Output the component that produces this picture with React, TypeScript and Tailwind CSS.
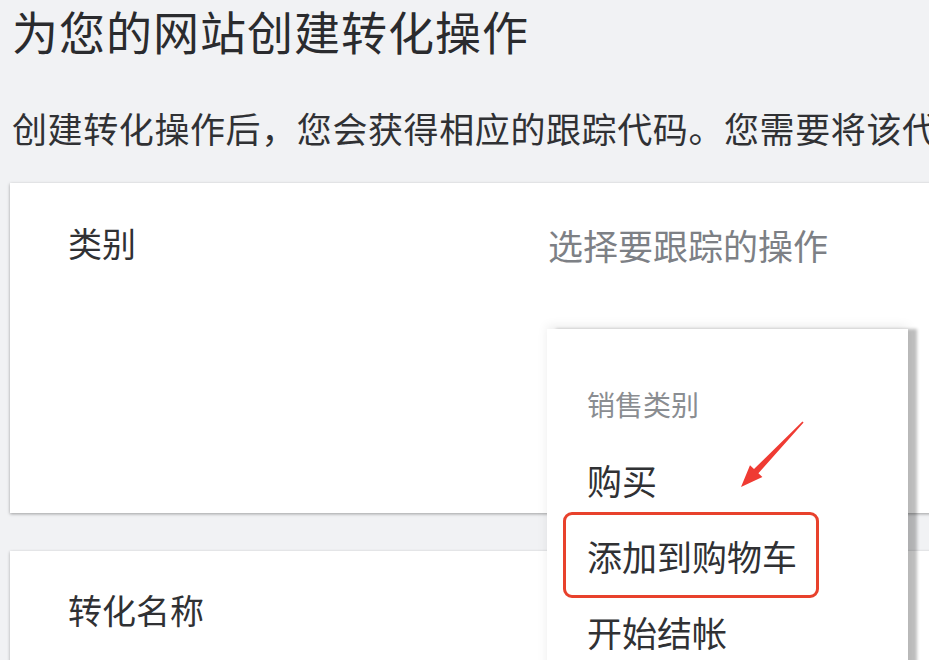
import React from "react";

const font = { fontFamily: '"Noto Sans CJK SC", "Noto Sans", sans-serif' };

const menuItems = ["购买", "添加到购物车", "开始结帐"];

export default function App() {
  return (
    <div
      className="relative w-[929px] h-[660px] overflow-hidden bg-[#f1f2f4] text-[#303134]"
      style={font}
    >
      <h1 className="pl-[12px] pt-[7px] text-[46px] leading-none tracking-[1px] font-normal whitespace-nowrap text-[#2a2b2e]">
        为您的网站创建转化操作
      </h1>
      <p className="pl-[12px] mt-[57px] text-[35px] leading-none tracking-[0.6px] whitespace-nowrap text-[#303134]">
        创建转化操作后，您会获得相应的跟踪代码。您需要将该代码添加到您的网站
      </p>

      {/* category card */}
      <div className="ml-[10px] mt-[38px] w-[960px] h-[330px] bg-white shadow-[0_1px_3px_rgba(0,0,0,0.35)] flex pt-[43px]">
        <div className="w-[538px] pl-[58px] text-[34px] leading-none text-[#303134]">类别</div>
        <div className="text-[35px] leading-none text-[#7d8085] mt-[1px]">选择要跟踪的操作</div>
      </div>

      {/* conversion name card */}
      <div className="ml-[10px] mt-[38px] w-[960px] h-[200px] bg-white shadow-[0_1px_3px_rgba(0,0,0,0.3)] pt-[42px] pl-[58px]">
        <div className="text-[34px] leading-none text-[#303134]">转化名称</div>
      </div>

      {/* open dropdown */}
      <div className="absolute left-[547px] top-[329px] w-[361px] h-[360px] bg-white shadow-[9px_0_3px_rgba(0,0,0,0.25),0_-3px_10px_rgba(0,0,0,0.08)] pt-[55px]">
        <div className="h-[40px] flex items-center pl-[40px] text-[28px] leading-none text-[#8a8d91]">
          销售类别
        </div>
        <div className="mt-[17px]">
          {menuItems.map((item) => (
            <div
              key={item}
              className="h-[76px] flex items-center pl-[40px] text-[35px] leading-none text-[#303134]"
            >
              {item}
            </div>
          ))}
        </div>
      </div>

      {/* annotation: highlight box */}
      <div className="absolute left-[563px] top-[512px] w-[256px] h-[86px] border-[3px] border-[#e8412c] rounded-[9px]" />

      {/* annotation: arrow */}
      <svg
        className="absolute left-0 top-0 pointer-events-none"
        width="929"
        height="660"
        viewBox="0 0 929 660"
      >
        <polygon
          points="803.6,422.4 758.4,473.2 762.4,477 741,487 750,465.2 754,469 802.4,421.6"
          fill="#ef3b33"
        />
      </svg>
    </div>
  );
}
